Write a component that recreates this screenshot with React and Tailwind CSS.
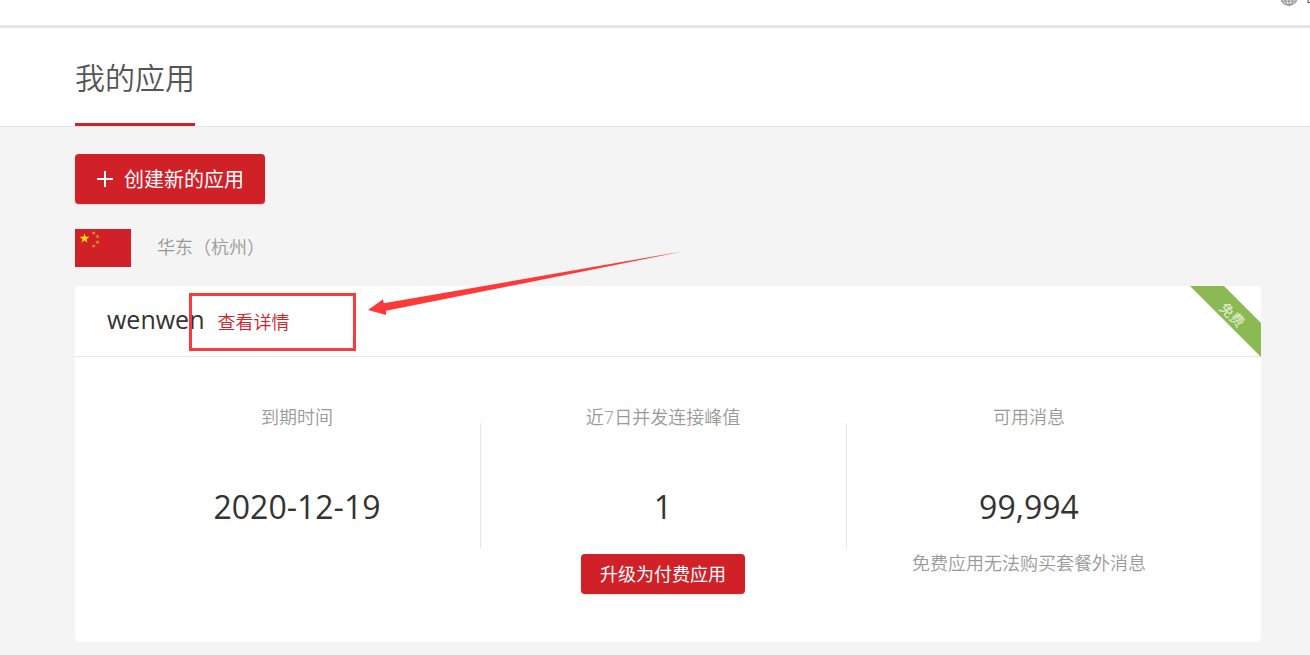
import React from "react";

const stats = [
  { label: "到期时间", value: "2020-12-19" },
  { label: "近7日并发连接峰值", value: "1", action: "升级为付费应用" },
  { label: "可用消息", value: "99,994", note: "免费应用无法购买套餐外消息" },
];

function GlobeIcon() {
  return (
    <svg viewBox="0 0 18 18" className="size-[18px] shrink-0" fill="none" stroke="#999" strokeWidth="1.3" aria-hidden="true">
      <circle cx="9" cy="9" r="8.2" />
      <ellipse cx="9" cy="9" rx="4.2" ry="8.2" />
      <path d="M9 .8v16.4M.8 9h16.4M2.2 4.6h13.6M2.2 13.2h13.6" />
    </svg>
  );
}

function Flag() {
  const star = "M0-3 .7-.95 2.85-.93 1.13.37 1.76 2.43 0 1.2-1.76 2.43-1.13.37-2.85-.93-.7-.95z";
  return (
    <svg viewBox="0 0 56 38" className="h-[38px] w-14 shrink-0" role="img" aria-label="中国">
      <path fill="#d02129" d="M0 0h56v38H0z" />
      <g fill="#ffde00">
        <path d={star} transform="translate(9.5 9.5) scale(1.75)" />
        <g opacity=".75">
          <path d={star} transform="translate(18.7 4) rotate(20) scale(.7)" />
          <path d={star} transform="translate(22.5 7.6) rotate(40) scale(.7)" />
          <path d={star} transform="translate(22.5 13.2) scale(.7)" />
          <path d={star} transform="translate(18.7 17) rotate(20) scale(.7)" />
        </g>
      </g>
    </svg>
  );
}

function Stat({ label, value, action, note }) {
  return (
    <div className="flex flex-col items-center">
      <p className="text-lg leading-6 text-[#999]">{label}</p>
      <p className="mt-[58px] text-[32px] leading-10 font-normal text-[#333]">{value}</p>
      {action && (
        <button type="button" className="mt-[27px] h-10 rounded-sm bg-[#d02129] px-[19px] text-lg leading-6 font-normal text-white shadow-sm">
          {action}
        </button>
      )}
      {note && <p className="mt-6 text-lg leading-6 text-[#999]">{note}</p>}
    </div>
  );
}

export default function App() {
  return (
    <div className="flex min-h-screen flex-col overflow-hidden bg-[#f4f4f4] font-['Open_Sans','Noto_Sans_CJK_SC',sans-serif] font-[350] text-[#333]">
      <div className="flex h-7 justify-end overflow-hidden border-b-3 border-[#e5e5e5] bg-white">
        <a href="#language" className="-mt-3 -mr-4 flex h-[18px] w-[46px] shrink-0 items-center gap-2 overflow-hidden text-base leading-none text-[#333]">
          <GlobeIcon />
          <span>EN</span>
        </a>
      </div>

      <header className="border-b border-[#e5e5e5] bg-white pl-[75px]">
        <h1 className="inline-block h-[98px] border-b-3 border-[#d02129] pt-7 align-top text-3xl leading-11 text-[#555]">
          我的应用
        </h1>
      </header>

      <main className="flex flex-col items-start pt-[27px] pr-[49px] pb-3 pl-[75px]">
        <button type="button" className="flex h-[50px] items-center gap-[11px] rounded-sm bg-[#d02129] pr-[21px] pl-[22px] text-xl font-normal text-white shadow-sm">
          <svg viewBox="0 0 16 16" className="size-4" stroke="currentColor" strokeWidth="2" aria-hidden="true">
            <path d="M8 0v16M0 8h16" />
          </svg>
          <span className="pt-0.5">创建新的应用</span>
        </button>

        <div className="mt-[25px] flex items-center gap-[26px]">
          <Flag />
          <span className="pb-0.5 text-lg leading-6 text-[#999]">华东（杭州）</span>
        </div>

        <section className="relative mt-[19px] w-full rounded-b-sm bg-white">
          <div className="flex h-[71px] items-center gap-[13px] border-b border-[#e5e5e5] pl-8">
            <h2 className="pb-1 text-[25px] leading-8 font-normal">wenwen</h2>
            <a href="#detail" className="pt-0.5 text-lg leading-6 text-[#d02129]">查看详情</a>
          </div>

          <div className="grid min-h-[285px] grid-cols-3 pt-12 pr-[49px] pl-[39px]">
            {stats.map((s, i) => (
              <div key={s.label} className="relative">
                <Stat {...s} />
                {i < 2 && <span className="absolute top-[18px] -right-px h-[125px] w-px bg-[#e5e5e5]" />}
              </div>
            ))}
          </div>

          <div className="absolute top-0 right-0 size-[71px] overflow-hidden">
            <svg viewBox="0 0 71 71" className="size-full" aria-hidden="true">
              <path fill="#8bb954" d="M0 0h34l37 37v34z" />
            </svg>
            <span className="absolute top-[19px] left-[28px] rotate-45 text-sm leading-5 font-normal whitespace-nowrap text-[#e8f3da]">免费</span>
          </div>

          <div className="pointer-events-none absolute top-[7px] left-[114px] h-[58px] w-[167px] border-3 border-[#fb3b3b]" />
          <svg viewBox="0 0 318 66" className="pointer-events-none absolute -top-[36px] left-[293px] h-[66px] w-[318px]" aria-hidden="true">
            <path fill="#fd3a3a" d="M0 60 15 49.3 15.7 53.3 317 1 18 60.8V65z" />
          </svg>
        </section>
      </main>
    </div>
  );
}
